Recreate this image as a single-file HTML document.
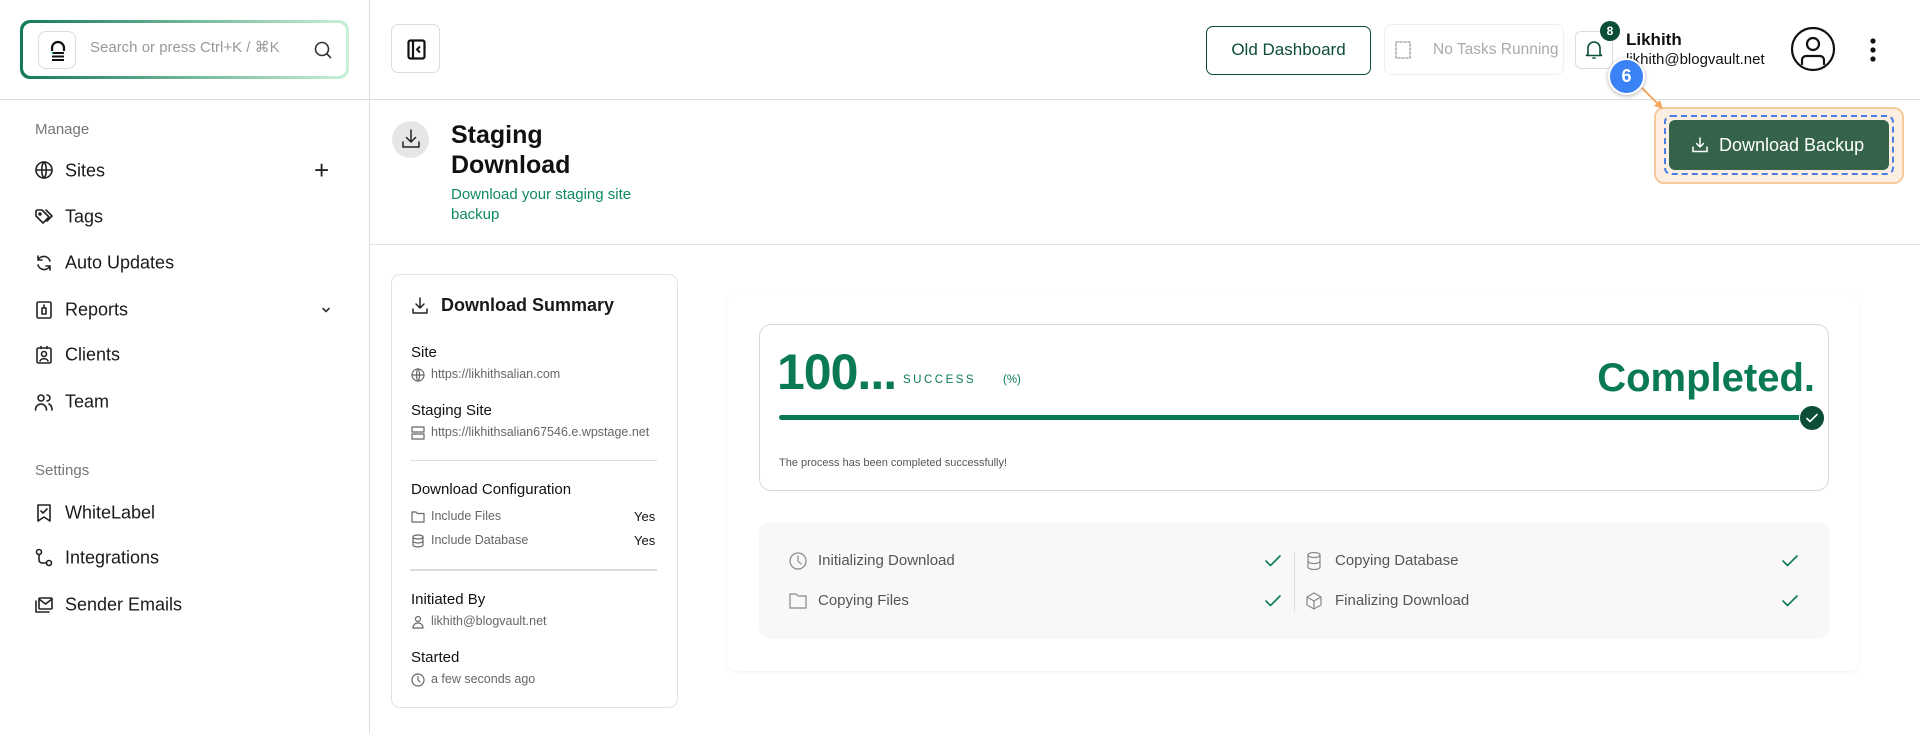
<!DOCTYPE html>
<html><head><meta charset="utf-8"><style>
*{box-sizing:border-box;margin:0;padding:0}
body{width:1920px;height:733px;overflow:hidden;background:#fff;font-family:"Liberation Sans",Arial,sans-serif;color:#111;position:relative}
.a{position:absolute;white-space:nowrap}
svg{display:block}
.ic{position:absolute;fill:none;stroke:currentColor;stroke-width:1.6;stroke-linecap:round;stroke-linejoin:round}
.nav{position:absolute;left:65px;font-size:18px;color:#1a1a1a;transform:translateY(-50%)}
.lab{font-size:15px;color:#111}
.sm{font-size:12.5px;color:#666}
.step{font-size:15px;color:#555}
</style></head><body>
<!-- layout lines -->
<div class="a" style="left:369px;top:0;width:1px;height:733px;background:#ddd"></div>
<div class="a" style="left:0;top:99px;width:1920px;height:1px;background:#ddd"></div>
<div class="a" style="left:370px;top:244px;width:1550px;height:1px;background:#e3e3e3"></div>

<!-- search -->
<div class="a" style="left:20px;top:20px;width:329px;height:59px;border-radius:10px;padding:3px;background:linear-gradient(90deg,#137a55,#c9f0d9)">
 <div style="width:100%;height:100%;background:#fff;border-radius:8px;position:relative">
  <div class="a" style="left:15px;top:8px;width:38px;height:38px;border:1px solid #ddd;border-radius:8px">
   <svg width="38" height="38" viewBox="0 0 38 38"><path d="M13 19v-3a6 6 0 0 1 12 0v3" fill="none" stroke="#111" stroke-width="2.2"/><rect x="13" y="20" width="12" height="2" fill="#111"/><rect x="13" y="23.5" width="12" height="2" fill="#111"/><rect x="13" y="27" width="12" height="2" fill="#111"/><circle cx="13.5" cy="21" r="1" fill="#1a9"/></svg>
  </div>
  <div class="a" style="left:67px;top:15px;font-size:15px;color:#999">Search or press Ctrl+K / ⌘K</div>
  <svg class="ic" style="left:290px;top:17px;color:#333" width="20" height="20" viewBox="0 0 20 20"><circle cx="9" cy="9" r="6.5"/><path d="M14 14l3.5 3.5"/></svg>
 </div>
</div>
<!-- collapse btn -->
<div class="a" style="left:391px;top:24px;width:49px;height:49px;border:1px solid #ddd;border-radius:7px">
 <svg width="49" height="49" viewBox="0 0 49 49"><rect x="16.5" y="15.5" width="16" height="18" rx="2" fill="none" stroke="#111" stroke-width="2.2"/><path d="M21 15.5v18" stroke="#111" stroke-width="2.2"/><path d="M28 21.5l-3 3 3 3" fill="none" stroke="#111" stroke-width="2"/></svg>
</div>

<!-- sidebar -->
<div class="a" style="left:35px;top:121px;font-size:15px;color:#777">Manage</div>
<svg class="ic" style="left:34px;top:160px;color:#222" width="20" height="20" viewBox="0 0 20 20"><circle cx="10" cy="10" r="8"/><path d="M2 10h16M10 2c3 3 3 13 0 16M10 2c-3 3-3 13 0 16"/></svg>
<div class="nav" style="top:171px">Sites</div>
<div class="a" style="left:314px;top:155px;font-size:26px;font-weight:300;color:#222">+</div>
<svg class="ic" style="left:34px;top:207px;color:#222" width="20" height="20" viewBox="0 0 20 20"><path d="M2 4v5l7 7 6-6-7-7H3z"/><circle cx="6" cy="7" r="1"/><path d="M12 3l6 6-5 5"/></svg>
<div class="nav" style="top:217px">Tags</div>
<svg class="ic" style="left:34px;top:253px;color:#222" width="20" height="20" viewBox="0 0 20 20"><path d="M16 8a6.5 6.5 0 0 0-12-1M4 3v4h4M4 12a6.5 6.5 0 0 0 12 1M16 17v-4h-4"/></svg>
<div class="nav" style="top:263px">Auto Updates</div>
<svg class="ic" style="left:34px;top:300px;color:#222" width="20" height="20" viewBox="0 0 20 20"><rect x="3" y="2" width="14" height="16" rx="1.5"/><path d="M8 8h4v6H8zM10 5v3"/></svg>
<div class="nav" style="top:310px">Reports</div>
<svg class="ic" style="left:320px;top:304px;color:#333" width="12" height="12" viewBox="0 0 12 12"><path d="M3 4.5l3 3 3-3"/></svg>
<svg class="ic" style="left:34px;top:345px;color:#222" width="20" height="20" viewBox="0 0 20 20"><rect x="3" y="3" width="14" height="15" rx="1.5"/><circle cx="10" cy="9" r="2.5"/><path d="M6 16c1-3 7-3 8 0M7 1.5v2M13 1.5v2"/></svg>
<div class="nav" style="top:355px">Clients</div>
<svg class="ic" style="left:34px;top:392px;color:#222" width="20" height="20" viewBox="0 0 20 20"><circle cx="7" cy="6" r="3"/><path d="M1.5 18c0-4 3-6 5.5-6s5.5 2 5.5 6M13 3a3 3 0 0 1 0 6M15 12c2 1 3 3 3 6"/></svg>
<div class="nav" style="top:402px">Team</div>
<div class="a" style="left:35px;top:462px;font-size:15px;color:#777">Settings</div>
<svg class="ic" style="left:34px;top:503px;color:#222" width="20" height="20" viewBox="0 0 20 20"><path d="M4 2h12v16l-6-4-6 4z"/><path d="M7 8l2 2 4-4"/></svg>
<div class="nav" style="top:513px">WhiteLabel</div>
<svg class="ic" style="left:34px;top:548px;color:#222" width="20" height="20" viewBox="0 0 20 20"><circle cx="5" cy="4" r="2.5"/><circle cx="15" cy="15" r="2.5"/><path d="M5 6.5V12a3 3 0 0 0 3 3h4.5"/></svg>
<div class="nav" style="top:558px">Integrations</div>
<svg class="ic" style="left:34px;top:595px;color:#222" width="20" height="20" viewBox="0 0 20 20"><rect x="5" y="3" width="13" height="11" rx="1"/><path d="M5 4l6.5 5L18 4M2 6v11h13"/></svg>
<div class="nav" style="top:605px">Sender Emails</div>

<!-- top right -->
<div class="a" style="left:1206px;top:26px;width:165px;height:49px;border:1.5px solid #0b4d35;border-radius:7px;font-size:17px;color:#0b4d35;text-align:center;line-height:46px">Old Dashboard</div>
<div class="a" style="left:1384px;top:24px;width:180px;height:51px;border:1px solid #eee;border-radius:8px;font-size:15.5px;color:#aaa;line-height:49px;padding-left:48px">No Tasks Running</div>
<svg class="ic" style="left:1394px;top:40px;color:#aaa;stroke-dasharray:2 2" width="18" height="20" viewBox="0 0 18 20"><rect x="2" y="2" width="14" height="16"/></svg>
<div class="a" style="left:1575px;top:31px;width:38px;height:38px;border:1px solid #ddd;border-radius:6px"></div>
<svg class="ic" style="left:1584px;top:39px;color:#0b4d35" width="20" height="22" viewBox="0 0 20 22"><path d="M4 15V9a6 6 0 0 1 12 0v6l1.5 1.5h-15zM9 19h2"/></svg>
<div class="a" style="left:1600px;top:21px;width:20px;height:20px;border-radius:50%;background:#0b4d35;color:#fff;font-size:12px;font-weight:bold;text-align:center;line-height:20px">8</div>
<div class="a" style="left:1626px;top:30px;font-size:17px;font-weight:bold;color:#111">Likhith</div>
<div class="a" style="left:1626px;top:51px;font-size:15px;color:#111">likhith@blogvault.net</div>
<svg class="ic" style="left:1790px;top:26px;color:#111;stroke-width:2.2" width="46" height="46" viewBox="0 0 46 46"><circle cx="23" cy="23" r="21"/><circle cx="23" cy="18" r="6"/><path d="M12 38v-4a4 4 0 0 1 4-4h14a4 4 0 0 1 4 4v4"/></svg>
<svg class="a" style="left:1868px;top:37px" width="10" height="26" viewBox="0 0 10 26"><circle cx="5" cy="4" r="2.6" fill="#111"/><circle cx="5" cy="13" r="2.6" fill="#111"/><circle cx="5" cy="22" r="2.6" fill="#111"/></svg>

<!-- page header -->
<div class="a" style="left:392px;top:121px;width:37px;height:37px;border-radius:50%;background:#e6e6e6"></div>
<svg class="ic" style="left:400px;top:128px;color:#222;stroke-width:1.5" width="22" height="22" viewBox="0 0 22 22"><path d="M11 2v12M6.5 9.5L11 14l4.5-4.5M3 14v5h16v-5"/></svg>
<div class="a" style="left:451px;top:120px;font-size:25px;font-weight:bold;line-height:30px;color:#111">Staging<br>Download</div>
<div class="a" style="left:451px;top:185px;font-size:15px;line-height:20px;color:#0f8a5f">Download your staging site<br>backup</div>

<!-- download backup highlight -->
<div class="a" style="left:1654px;top:107px;width:250px;height:77px;border:2px solid #f6c99c;background:#fdeee2;border-radius:10px"></div>
<div class="a" style="left:1664px;top:115px;width:230px;height:60px;border:2px dashed #4a7fe6;border-radius:7px"></div>
<div class="a" style="left:1669px;top:120px;width:220px;height:50px;background:#356349;border-radius:6px;color:#fff;font-size:18px;line-height:50px;padding-left:50px">Download Backup</div>
<svg class="ic" style="left:1691px;top:136px;color:#fff;stroke-width:1.5" width="18" height="18" viewBox="0 0 18 18"><path d="M9 2v9M5.5 7.5L9 11l3.5-3.5M2 11v4.5h14V11"/></svg>
<svg class="a" style="left:1640px;top:86px" width="30" height="30" viewBox="0 0 30 30"><path d="M2 2L20 20" stroke="#f4a860" stroke-width="2"/><path d="M23 23l-9-3 6-6z" fill="#f4a860"/></svg>
<div class="a" style="left:1608px;top:58px;width:37px;height:37px;border-radius:50%;background:#3b82f6;border:2.5px solid #fff;box-shadow:0 1px 4px rgba(0,0,0,.3);color:#fff;font-size:18px;font-weight:bold;text-align:center;line-height:32px">6</div>

<!-- summary card -->
<div class="a" style="left:391px;top:274px;width:287px;height:434px;border:1px solid #e2e2e2;border-radius:9px"></div>
<svg class="ic" style="left:410px;top:296px;color:#222;stroke-width:1.5" width="20" height="20" viewBox="0 0 20 20"><path d="M10 2v10M6 8l4 4 4-4M3 13v4h14v-4"/></svg>
<div class="a" style="left:441px;top:295px;font-size:18px;font-weight:bold;color:#1a1a1a">Download Summary</div>
<div class="a lab" style="left:411px;top:344px">Site</div>
<svg class="ic" style="left:411px;top:368px;color:#666;stroke-width:1.2" width="14" height="14" viewBox="0 0 14 14"><circle cx="7" cy="7" r="6"/><path d="M1 7h12M7 1c2 2 2 10 0 12M7 1c-2 2-2 10 0 12"/></svg>
<div class="a sm" style="left:431px;top:367px">https://likhithsalian.com</div>
<div class="a lab" style="left:411px;top:402px">Staging Site</div>
<svg class="ic" style="left:411px;top:426px;color:#666;stroke-width:1.2" width="14" height="14" viewBox="0 0 14 14"><rect x="1" y="1" width="12" height="5"/><rect x="1" y="8" width="12" height="5"/></svg>
<div class="a sm" style="left:431px;top:425px">https://likhithsalian67546.e.wpstage.net</div>
<div class="a" style="left:410px;top:460px;width:247px;height:1px;background:#ddd"></div>
<div class="a lab" style="left:411px;top:481px">Download Configuration</div>
<svg class="ic" style="left:411px;top:510px;color:#666;stroke-width:1.2" width="14" height="14" viewBox="0 0 14 14"><path d="M1 2h4l1.5 1.5H13V12H1z"/></svg>
<div class="a sm" style="left:431px;top:509px">Include Files</div>
<div class="a" style="left:634px;top:509px;font-size:13px;color:#111">Yes</div>
<svg class="ic" style="left:411px;top:534px;color:#666;stroke-width:1.2" width="14" height="14" viewBox="0 0 14 14"><ellipse cx="7" cy="3" rx="5" ry="2"/><path d="M2 3v8c0 1 2 2 5 2s5-1 5-2V3M2 7c0 1 2 2 5 2s5-1 5-2"/></svg>
<div class="a sm" style="left:431px;top:533px">Include Database</div>
<div class="a" style="left:634px;top:533px;font-size:13px;color:#111">Yes</div>
<div class="a" style="left:410px;top:569px;width:247px;height:2px;background:#ddd"></div>
<div class="a lab" style="left:411px;top:591px">Initiated By</div>
<svg class="ic" style="left:411px;top:615px;color:#666;stroke-width:1.2" width="14" height="14" viewBox="0 0 14 14"><circle cx="7" cy="4" r="2.5"/><path d="M2 13c0-3 2-5 5-5s5 2 5 5z"/></svg>
<div class="a sm" style="left:431px;top:614px">likhith@blogvault.net</div>
<div class="a lab" style="left:411px;top:649px">Started</div>
<svg class="ic" style="left:411px;top:673px;color:#666;stroke-width:1.2" width="14" height="14" viewBox="0 0 14 14"><circle cx="7" cy="7" r="6"/><path d="M7 3.5V7l2 2"/></svg>
<div class="a sm" style="left:431px;top:672px">a few seconds ago</div>

<!-- right panel -->
<div class="a" style="left:727px;top:294px;width:1132px;height:377px;border-radius:10px;box-shadow:0 1px 4px rgba(0,0,0,.06)"></div>
<div class="a" style="left:759px;top:324px;width:1070px;height:167px;border:1px solid #d8d8d8;border-radius:12px"></div>
<div class="a" style="left:777px;top:343px;font-size:50px;font-weight:bold;color:#0a7a52;letter-spacing:-1px">100...</div>
<div class="a" style="left:903px;top:374px;font-size:11.5px;letter-spacing:2.5px;color:#0a7a52">SUCCESS</div>
<div class="a" style="left:1003px;top:374px;font-size:11.5px;color:#0a7a52">(%)</div>
<div class="a" style="right:105px;top:356px;font-size:40px;font-weight:bold;color:#0a7a52">Completed.</div>
<div class="a" style="left:779px;top:415px;width:1033px;height:5px;background:#0a7a52;border-radius:3px"></div>
<div class="a" style="left:1799px;top:405px;width:26px;height:26px;border-radius:50%;background:#0b4d35;border:1px solid #fff"></div>
<svg class="ic" style="left:1805px;top:411px;color:#fff;stroke-width:1.6" width="14" height="14" viewBox="0 0 14 14"><path d="M2 7.5l3 3 7-7"/></svg>
<div class="a" style="left:779px;top:457px;font-size:11px;color:#555">The process has been completed successfully!</div>

<div class="a" style="left:759px;top:522px;width:1070px;height:117px;background:#f8f8f8;border-radius:12px"></div>
<div class="a" style="left:1294px;top:551px;width:1px;height:61px;background:#ddd"></div>
<svg class="ic" style="left:788px;top:551px;color:#888;stroke-width:1.2" width="20" height="20" viewBox="0 0 20 20"><circle cx="10" cy="10" r="8"/><path d="M10 5v5l3 3"/></svg>
<div class="a step" style="left:818px;top:552px">Initializing Download</div>
<svg class="ic" style="left:788px;top:591px;color:#888;stroke-width:1.2" width="20" height="20" viewBox="0 0 20 20"><path d="M2 3h6l2 2h8v12H2z"/></svg>
<div class="a step" style="left:818px;top:592px">Copying Files</div>
<svg class="ic" style="left:1304px;top:551px;color:#888;stroke-width:1.2" width="20" height="20" viewBox="0 0 20 20"><ellipse cx="10" cy="4" rx="6" ry="2.5"/><path d="M4 4v12c0 1.4 2.7 2.5 6 2.5s6-1.1 6-2.5V4M4 10c0 1.4 2.7 2.5 6 2.5s6-1.1 6-2.5"/></svg>
<div class="a step" style="left:1335px;top:552px">Copying Database</div>
<svg class="ic" style="left:1304px;top:591px;color:#888;stroke-width:1.2" width="20" height="20" viewBox="0 0 20 20"><path d="M10 2l7 4v8l-7 4-7-4V6zM3 6l7 4 7-4M10 10v8"/></svg>
<div class="a step" style="left:1335px;top:592px">Finalizing Download</div>
<svg class="ic" style="left:1264px;top:552px;color:#0a7a52;stroke-width:1.6" width="18" height="18" viewBox="0 0 18 18"><path d="M2 9l4.5 4.5L16 4"/></svg>
<svg class="ic" style="left:1264px;top:592px;color:#0a7a52;stroke-width:1.6" width="18" height="18" viewBox="0 0 18 18"><path d="M2 9l4.5 4.5L16 4"/></svg>
<svg class="ic" style="left:1781px;top:552px;color:#0a7a52;stroke-width:1.6" width="18" height="18" viewBox="0 0 18 18"><path d="M2 9l4.5 4.5L16 4"/></svg>
<svg class="ic" style="left:1781px;top:592px;color:#0a7a52;stroke-width:1.6" width="18" height="18" viewBox="0 0 18 18"><path d="M2 9l4.5 4.5L16 4"/></svg>
</body></html>
